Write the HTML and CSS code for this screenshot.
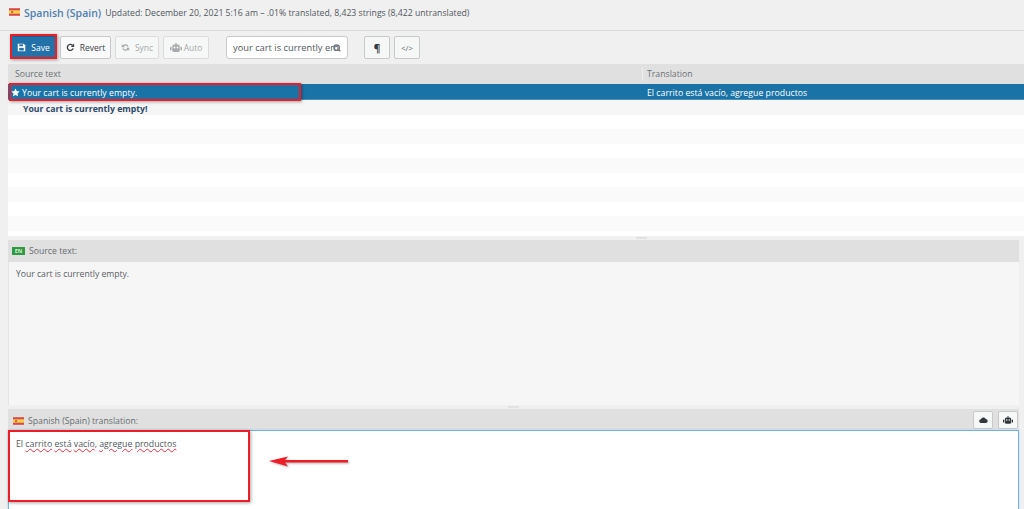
FILE: index.html
```html
<!DOCTYPE html>
<html lang="en">
<head>
    <meta charset="UTF-8">
    <meta name="viewport" content="width=device-width, initial-scale=1.0">
    <title>Spanish (Spain) translation</title>
    <link rel="stylesheet" href="styles.css">
</head>
<body>
    <svg width="0" height="0" class="defs">
        <symbol id="flag" viewBox="0 0 16 11">
            <rect width="16" height="11" fill="#d8474a"/>
            <rect y="3" width="16" height="5" fill="#f5cf4b"/>
            <rect x="3" y="4" width="3" height="3" fill="#c96a3c"/>
        </symbol>
        <symbol id="robot" viewBox="0 0 16 12">
            <rect x="3" y="2" width="10" height="10" rx="2.5"/>
            <rect x="0" y="5" width="2" height="5" rx="1"/>
            <rect x="14" y="5" width="2" height="5" rx="1"/>
            <rect x="7" y="0" width="2" height="2"/>
            <circle cx="6" cy="6" r="1.2" fill="#fff"/>
            <circle cx="10" cy="6" r="1.2" fill="#fff"/>
        </symbol>
        <symbol id="sync" viewBox="0 0 12 12">
            <path d="M10.2 4.6A4.5 4.5 0 0 0 2.6 3L1 1.6V5.6h4L3.8 4.2a2.9 2.9 0 0 1 4.8 .9zM1.8 7.4a4.5 4.5 0 0 0 7.6 1.6L11 10.4V6.400H7l1.200 1.400a2.900 2.900 0 0 1-4.800-.9z"/>
        </symbol>
    </svg>

    <div class="page">
        <div class="head">
            <svg class="flag"><use href="#flag"/></svg>
            <span class="locale">Spanish (Spain)</span>
            <span class="stats">Updated: December 20, 2021 5:16 am – .01% translated, 8,423 strings (8,422 untranslated)</span>
        </div>

        <div class="toolbar">
            <button class="btn save">
                <svg class="ico" viewBox="0 0 12 12"><path fill="#fff" d="M1 1h8l2 2v8H1z"/><rect x="3" y="1.800" width="5" height="2.500" fill="#2271a8"/><rect x="3" y="6.500" width="6" height="3.500" fill="#2271a8"/></svg>
                Save
            </button>
            <button class="btn revert">
                <svg class="ico" viewBox="0 0 12 12"><path fill="none" stroke="#3a3f44" stroke-width="1.800" d="M9.600 7.200A4 4 0 1 1 8.600 3"/><path fill="#3a3f44" d="M10.800 .8v4.400H6.400z"/></svg>
                Revert
            </button>
            <button class="btn off sync"><svg class="ico"><use href="#sync"/></svg>Sync</button>
            <button class="btn off auto"><svg class="ico-wide"><use href="#robot"/></svg>Auto</button>
            <div class="search">
                <span class="search-text">your cart is currently em</span>
                <svg class="search-ico" viewBox="0 0 12 12"><circle cx="5.500" cy="5.500" r="4" fill="none" stroke="#70767b" stroke-width="2"/><path d="M8 8l3 3" stroke="#70767b" stroke-width="2"/></svg>
            </div>
            <button class="btn square para">¶</button>
            <button class="btn square code">&lt;/&gt;</button>
        </div>

        <div class="list">
            <div class="list-head">
                <div class="col-src">Source text</div>
                <div class="col-tr">Translation</div>
            </div>
            <div class="row selected">
                <div class="col-src">
                    <svg class="star" viewBox="0 0 12 12"><path fill="#fff" d="M6 .5l1.700 3.500 3.800.5-2.800 2.700.7 3.800L6 9.200 2.600 11l.7-3.800L.5 4.500l3.800-.5z"/></svg>
                    Your cart is currently empty.
                </div>
                <div class="col-tr">El carrito está vacío, agregue productos</div>
            </div>
            <div class="row ghost"><div class="col-src">Your cart is currently empty!</div></div>
            <div class="row"></div>
            <div class="row"></div>
            <div class="row"></div>
            <div class="row"></div>
            <div class="row"></div>
            <div class="row"></div>
            <div class="row"></div>
            <div class="row"></div>
        </div>

        <div class="splitter first"><span class="grip"></span></div>

        <div class="pane-head">
            <span class="en">EN</span>
            <span>Source text:</span>
        </div>
        <div class="source-body">Your cart is currently empty.</div>

        <div class="splitter second"><span class="grip"></span></div>

        <div class="pane-head target">
            <svg class="flag small"><use href="#flag"/></svg>
            <span class="target-label">Spanish (Spain) translation:</span>
            <div class="pane-btns">
                <button class="mini"><svg viewBox="0 0 12 8" width="9" height="6"><path fill="#33383d" d="M3 8a2.500 2.500 0 0 1-.4-5A3.500 3.500 0 0 1 9 2.500 2.800 2.800 0 0 1 9.500 8z"/></svg></button>
                <button class="mini"><svg class="mini-robot"><use href="#robot"/></svg></button>
            </div>
        </div>
        <div class="editor">
            <span>El</span> <span class="typo">carrito</span> <span class="typo">está</span> <span class="typo">vacío</span>, <span class="typo">agregue</span> <span class="typo">productos</span>
        </div>
    </div>

    <!-- red marks drawn on top of the screenshot -->
    <div class="mark mark-save"></div>
    <div class="mark mark-row"></div>
    <div class="mark mark-editor"></div>
    <svg class="arrow" viewBox="0 0 80 12" width="80" height="12">
        <path d="M0 6L19 1.500 16 5H79V7.500H16l3 4z" fill="#ee1c25"/>
    </svg>
</body>
</html>
```

FILE: styles.css
```css
* {
    box-sizing: border-box;
}

body {
    margin: 0;
    height: 509px;
    overflow: hidden;
    background: #f0f0f1;
    font-family: "Open Sans", "Noto Sans", sans-serif;
    font-size: 8.7px;
    color: #5a6066;
    position: relative;
}

.defs {
    position: absolute;
}

.page {
    padding-left: 8px;
    height: 509px;
    overflow: hidden;
}

/* top line */
.head {
    height: 31px;
    margin-left: -8px;
    padding: 0 0 4px 9px;
    display: flex;
    align-items: center;
    border-bottom: 1px solid #dcdcde;
}

.flag {
    width: 11px;
    height: 8px;
    margin-right: 4px;
    margin-bottom: 2px;
}

.locale {
    font-size: 10.5px;
    font-weight: 600;
    color: #4f7fae;
    margin-right: 4px;
}

.stats {
    font-size: 8.7px;
    color: #50575e;
}

/* toolbar */
.toolbar {
    height: 33px;
    display: flex;
    align-items: center;
    padding: 0 0 0 3px;
}

.btn {
    height: 23px;
    border: 1px solid #c8c9cb;
    border-radius: 2px;
    background: #f6f7f7;
    color: #3c434a;
    font: 8.5px "Open Sans", sans-serif;
    padding: 0;
    margin-right: 4px;
    display: flex;
    align-items: center;
    justify-content: center;
    gap: 5px;
}

.save {
    width: 45px;
    background: #2271a8;
    border-color: #1b5f90;
    color: #fff;
}

.revert {
    width: 51px;
    background: #fafafa;
}

.sync {
    width: 44px;
}

.auto {
    width: 46px;
    gap: 2px;
}

.off {
    color: #a7aaad;
    fill: #a7aaad;
    border-color: #dcdcde;
}

.ico {
    width: 9px;
    height: 9px;
}

.ico-wide {
    width: 12px;
    height: 9px;
}

.search {
    width: 122px;
    height: 23px;
    margin-left: 13px;
    margin-right: 16px;
    padding: 0 1px 0 6px;
    background: #fff;
    border: 1px solid #c8c9cb;
    border-radius: 3px;
    display: flex;
    align-items: center;
    font-size: 9.3px;
    color: #50575e;
    white-space: nowrap;
}

.search-ico {
    flex: none;
    width: 8px;
    height: 8px;
    margin-left: -6px;
}

.square {
    width: 26px;
}

.para {
    font-weight: 700;
    font-size: 10px;
    color: #33383d;
}

.code {
    font-size: 8px;
    color: #646970;
}

/* string list */
.list {
    background: #fff;
    padding-bottom: 5.5px;
}

.list-head {
    height: 20px;
    background: #e0e0e0;
    display: flex;
    align-items: center;
    color: #6c7075;
}

.col-src {
    width: 634px;
    padding-left: 7px;
    display: flex;
    align-items: center;
    white-space: nowrap;
}

.col-tr {
    flex: 1;
    padding-left: 4px;
    border-left: 1px solid #eeeeee;
    line-height: 14px;
}

.row {
    height: 14.5px;
    display: flex;
    align-items: center;
    background: #fff;
}

.row:nth-child(odd) {
    background: #fafafa;
}

.list > .selected {
    height: 16px;
    padding-top: 2px;
    background: #1a73a7;
    color: #fff;
    border-bottom: 1px solid #4a8fb8;
}

.selected .col-src {
    padding-left: 3px;
    font-size: 8.75px;
}

.selected .col-tr {
    border-left-color: transparent;
    font-size: 8.75px;
}

.star {
    width: 9px;
    height: 9px;
    margin-right: 2px;
}

.list > .ghost {
    padding-top: 3px;
    background: #f6f6f6;
}

.ghost .col-src {
    padding-left: 15px;
    font-weight: 700;
    color: #2c4a6a;
}

/* drag bar between panes */
.splitter {
    height: 4px;
    display: flex;
    justify-content: center;
    align-items: center;
    background: #f0f0f1;
}

.splitter.first {
    padding-left: 250px;
}

.splitter.second {
    margin-right: 5px;
}

.grip {
    width: 11px;
    height: 2px;
    background: #e2e2e2;
}

/* source and target panes */
.pane-head {
    height: 22px;
    margin-right: 5px;
    padding-left: 4px;
    background: #e0e0e0;
    display: flex;
    align-items: center;
    color: #666b70;
}

.en {
    width: 13px;
    height: 8px;
    margin-right: 4px;
    background: #2f9a3f;
    color: #d6efd9;
    font-size: 5.500px;
    font-weight: 700;
    line-height: 8px;
    text-align: center;
}

.source-body {
    height: 143px;
    margin-right: 5px;
    padding: 6px 0 0 7px;
    background: #f6f6f6;
    border-left: 1px solid #e4e4e4;
    line-height: 12px;
    font-size: 8.6px;
}

.target {
    height: 21px;
}

.flag.small {
    margin-bottom: 0;
    margin-left: 1px;
    margin-right: 4px;
    margin-top: 3px;
}

.target-label {
    margin-top: 3px;
}

.pane-btns {
    margin-left: auto;
    margin-right: 1px;
    display: flex;
    gap: 5px;
}

.mini {
    width: 20px;
    height: 18px;
    padding: 0;
    background: #f6f7f7;
    border: 1px solid #c8c9cb;
    border-radius: 2px;
    display: flex;
    align-items: center;
    justify-content: center;
    fill: #33383d;
}

.mini-robot {
    width: 10px;
    height: 8px;
}

.editor {
    height: 79px;
    padding: 7px 0 0 7px;
    background: #fff;
    border: 1px solid #74b3e2;
    border-bottom: 0;
    margin-right: 5px;
    box-shadow: 0 0 2px #a9d0ec;
    line-height: 13px;
    font-size: 8.75px;
    color: #50575e;
}

.typo {
    text-decoration: underline wavy #e6323c 1px;
    text-underline-offset: 1px;
}

/* red annotation marks */
.mark {
    position: absolute;
    border: 2px solid #ee1c25;
    box-shadow: 1px 1px 3px rgba(0, 0, 0, 0.35);
}

.mark-save {
    left: 10px;
    top: 34px;
    width: 47px;
    height: 25px;
}

.mark-row {
    left: 9px;
    top: 83px;
    width: 292px;
    height: 18px;
}

.mark-editor {
    left: 8px;
    top: 430px;
    width: 242px;
    height: 72px;
}

.arrow {
    position: absolute;
    left: 269px;
    top: 455px;
    filter: drop-shadow(1px 1px 1px rgba(0, 0, 0, 0.3));
}
```
